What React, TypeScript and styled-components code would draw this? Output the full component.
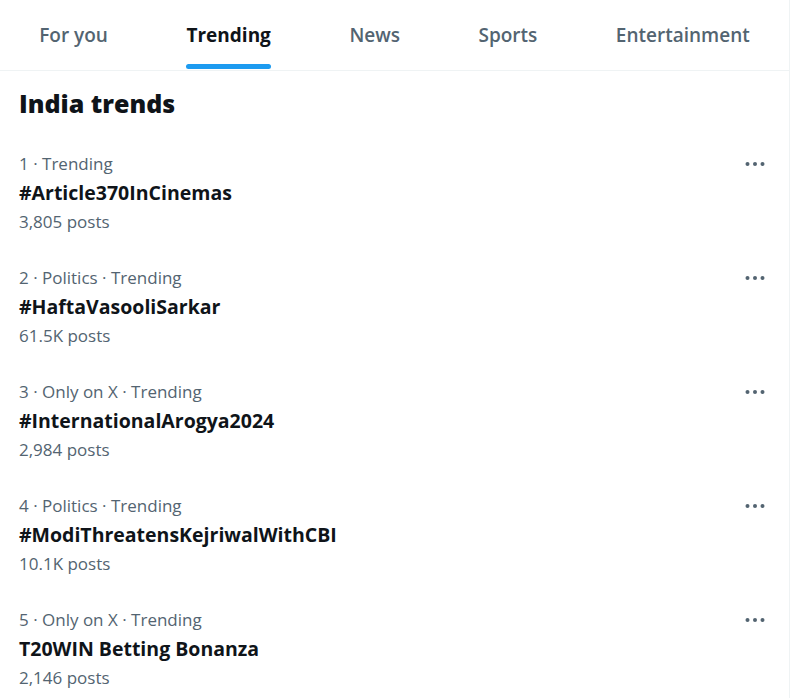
import React from 'react'
import { styled, createGlobalStyle } from 'styled-components'

type Trend = {
    rank: number;
    context: string[];
    name: string;
    posts: string;
}

const trends: Trend[] = [
    { rank: 1, context: ['Trending'], name: '#Article370InCinemas', posts: '3,805 posts' },
    { rank: 2, context: ['Politics', 'Trending'], name: '#HaftaVasooliSarkar', posts: '61.5K posts' },
    { rank: 3, context: ['Only on X', 'Trending'], name: '#InternationalArogya2024', posts: '2,984 posts' },
    { rank: 4, context: ['Politics', 'Trending'], name: '#ModiThreatensKejriwalWithCBI', posts: '10.1K posts' },
    { rank: 5, context: ['Only on X', 'Trending'], name: 'T20WIN Betting Bonanza', posts: '2,146 posts' },
]

const tabs = ['For you', 'Trending', 'News', 'Sports', 'Entertainment']

const MoreIcon = () => (
    <svg width="22" height="22" viewBox="0 0 22 22" fill="#536471">
        <circle cx="3.5" cy="11" r="2" />
        <circle cx="11" cy="11" r="2" />
        <circle cx="18.5" cy="11" r="2" />
    </svg>
)

const App = () => {
    return (
        <>
            <GlobalStyle />
            <Page>
                <TabBar>
                    {tabs.map(t => (
                        <Tab key={t} $active={t === 'Trending'}>
                            <TabLabel $active={t === 'Trending'}>{t}</TabLabel>
                        </Tab>
                    ))}
                </TabBar>
                <Heading>India trends</Heading>
                {trends.map(tr => (
                    <Row key={tr.rank}>
                        <Info>
                            <Meta>{[String(tr.rank), ...tr.context].join(' · ')}</Meta>
                            <Name>{tr.name}</Name>
                            <Meta>{tr.posts}</Meta>
                        </Info>
                        <MoreButton><MoreIcon /></MoreButton>
                    </Row>
                ))}
            </Page>
        </>
    )
}

export default App

const GlobalStyle = createGlobalStyle`
    body {
        margin: 0;
        background: #fff;
        font-family: "Open Sans", "Noto Sans", sans-serif;
    }
`

const Page = styled.div`
    width: 789px;
    height: 698px;
    border-right: 1px solid #eff3f4;
    overflow: hidden;
`

const TabBar = styled.div`
    display: flex;
    height: 70px;
    border-bottom: 1px solid #eff3f4;
`

const Tab = styled.div<{ $active: boolean }>`
    flex: 1 1 auto;
    display: flex;
    justify-content: center;
    font-size: 19px;
    font-weight: ${p => p.$active ? 700 : 600};
    color: ${p => p.$active ? '#0f1419' : '#536471'};
`

const TabLabel = styled.div<{ $active: boolean }>`
    position: relative;
    line-height: 70px;
    &::after {
        content: '';
        display: ${p => p.$active ? 'block' : 'none'};
        position: absolute;
        left: 0;
        right: 0;
        bottom: 1px;
        height: 5px;
        border-radius: 3px;
        background: #1d9bf0;
    }
`

const Heading = styled.h2`
    margin: 0;
    padding: 17px 19px 18px;
    font-size: 25px;
    line-height: 30px;
    font-weight: 800;
    color: #0f1419;
`

const Row = styled.div`
    display: flex;
    justify-content: space-between;
    padding: 13px 23px 14px 19px;
`

const Info = styled.div`
    display: flex;
    flex-direction: column;
`

const Meta = styled.div`
    font-size: 17px;
    line-height: 29px;
    color: #536471;
`

const Name = styled.div`
    font-size: 19.5px;
    line-height: 29px;
    font-weight: 700;
    color: #0f1419;
`

const MoreButton = styled.div`
    height: 29px;
    display: flex;
    align-items: center;
`
